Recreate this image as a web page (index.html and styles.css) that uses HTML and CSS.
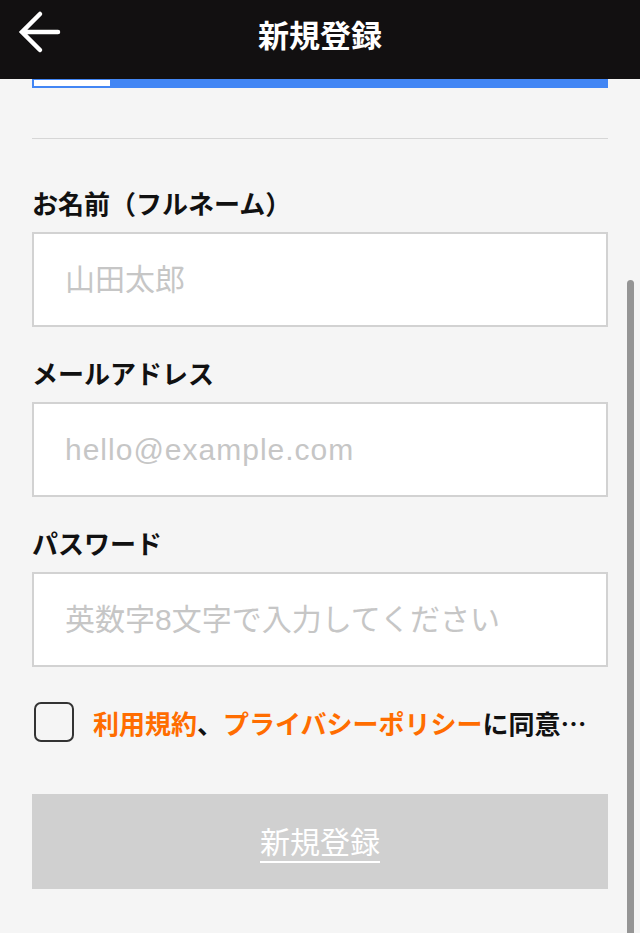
FILE: index.html
```html
<!DOCTYPE html>
<html lang="ja">
<head>
<meta charset="utf-8">
<title>新規登録</title>
<link rel="stylesheet" href="styles.css">
</head>
<body>
<header class="topbar">
  <a class="back" href="#" aria-label="戻る">
    <svg width="80" height="79" viewBox="0 0 80 79"><path d="M58 32 H22 M40 14 L22 32 L40 50" fill="none" stroke="#fff" stroke-width="4.5" stroke-linecap="round" stroke-linejoin="miter"/></svg>
  </a>
  <h1 class="title">新規登録</h1>
  <span></span>
</header>
<main class="page">
  <div class="progress"><div class="progress-done" style="width:76px"></div></div>
  <hr class="divider">
  <form class="form">
    <div class="field">
      <label class="label" for="name">お名前（フルネーム）</label>
      <input class="input" id="name" type="text" placeholder="山田太郎">
    </div>
    <div class="field">
      <label class="label" for="mail">メールアドレス</label>
      <input class="input input-latin" id="mail" type="email" placeholder="hello@example.com">
    </div>
    <div class="field">
      <label class="label" for="pw">パスワード</label>
      <input class="input" id="pw" type="password" placeholder="英数字8文字で入力してください">
    </div>
    <div class="agree">
      <span class="check"></span>
      <span class="agree-text"><a class="link" href="#">利用規約</a>、<a class="link" href="#">プライバシーポリシー</a>に同意…</span>
    </div>
    <button class="submit" type="button"><span class="submit-text">新規登録</span></button>
  </form>
</main>
<div class="scrollbar"></div>
</body>
</html>
```
FILE: styles.css
```css
* { box-sizing: border-box; }
html, body { margin: 0; padding: 0; }
body {
  background: #f5f5f5;
  font-family: "Noto Sans CJK JP", "Liberation Sans", sans-serif;
  color: #111;
  height: 933px;
  overflow: hidden;
  position: relative;
}
.topbar {
  height: 79px;
  background: #121011;
  display: grid;
  grid-template-columns: 80px 1fr 80px;
  align-items: center;
}
.back { display: block; height: 79px; }
.back svg { display: block; }
.title {
  margin: 0 0 12px;
  text-align: center;
  color: #fff;
  font-size: 31px;
  font-weight: 700;
  line-height: 1;
}
.page { padding: 0 32px; }
.progress {
  height: 9px;
  background: #4286f4;
  padding: 1px 0 2px 2px;
}
.progress-done { height: 6px; background: #fff; }
.divider {
  border: 0;
  height: 1px;
  background: #d6d6d6;
  margin: 50px 0 0;
}
.form { display: flex; flex-direction: column; padding-top: 44px; }
.field { display: flex; flex-direction: column; gap: 9px; margin-bottom: 26px; }
.label {
  font-size: 26px;
  font-weight: 700;
  line-height: 40px;
  color: #111;
}
.input {
  height: 95px;
  border: 2px solid #d2d2d2;
  background: #fff;
  padding: 0 20px 0 31px;
  font-family: "Liberation Sans", "Noto Sans CJK JP", sans-serif;
  font-size: 30px;
  color: #333;
  outline: none;
}
.input-latin { letter-spacing: 1px; }
.input::placeholder { color: #c6c6c6; }
.agree {
  display: flex;
  align-items: center;
  gap: 19px;
  margin-top: 9px;
  padding-left: 2px;
  height: 40px;
}
.check {
  width: 40px;
  height: 40px;
  flex: none;
  border: 2px solid #333;
  border-radius: 7px;
}
.agree-text {
  font-size: 26px;
  font-weight: 700;
  white-space: nowrap;
  color: #111;
}
.link { color: #ff6d00; text-decoration: none; }
.submit {
  margin-top: 52px;
  height: 95px;
  border: 0;
  background: #d0d0d0;
  display: flex;
  align-items: center;
  justify-content: center;
  font-family: inherit;
  padding: 0 0 4px;
}
.submit-text {
  color: #fff;
  font-size: 30px;
  text-decoration: underline;
  text-decoration-thickness: 2px;
  text-underline-offset: 8px;
}
.scrollbar {
  position: absolute;
  right: 6px;
  top: 280px;
  bottom: 0;
  width: 7px;
  background: #959595;
  border-radius: 4px 4px 0 0;
}
```
